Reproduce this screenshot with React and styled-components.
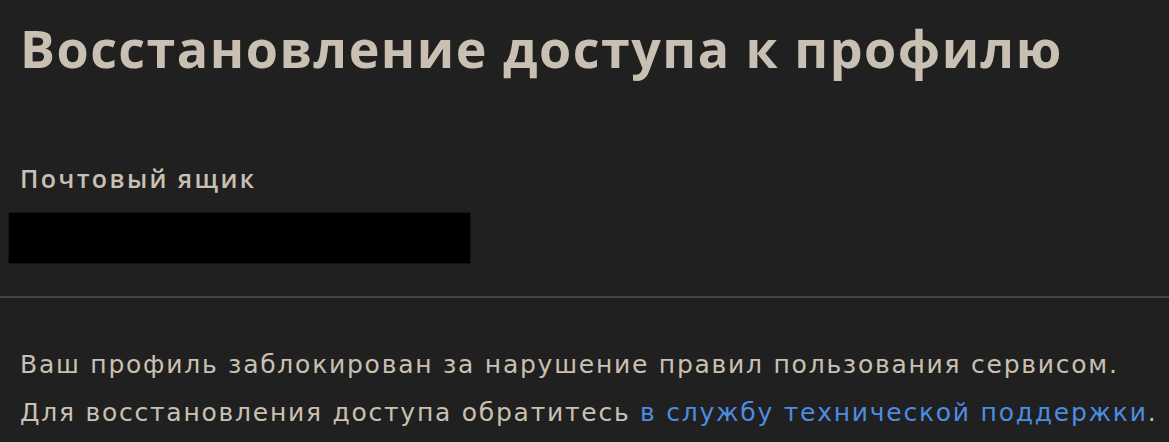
import React from "react";
import styled, { createGlobalStyle } from "styled-components";

const Global = createGlobalStyle`
  html, body { margin: 0; padding: 0; background: #202020; }
  body { font-family: "Open Sans", "Noto Sans", sans-serif; }
`;

const Page = styled.main`
  width: 1169px;
  height: 442px;
  background: #202020;
  color: #c9c0b3;
  overflow: hidden;
`;

const Header = styled.section`
  padding: 12px 20px 0;
`;

const Title = styled.h1`
  margin: 0;
  font-size: 52px;
  font-weight: 700;
  line-height: 72px;
  letter-spacing: 1.5px;
  color: #c9c0b3;
`;

const Form = styled.section`
  padding: 78px 8px 32px;
  border-bottom: 2px solid #444444;
`;

const Label = styled.div`
  padding-left: 12px;
  font-size: 25px;
  font-weight: 600;
  line-height: 32px;
  letter-spacing: 2.4px;
  color: #c9c0b3;
`;

const Redacted = styled.div`
  margin-top: 18px;
  width: 463px;
  height: 52px;
  background: #000;
  border: 1px solid #151515;
  box-sizing: border-box;
`;

const Notice = styled.section`
  padding: 43px 20px 0;
`;

const Line = styled.p`
  margin: 0;
  font-family: "DejaVu Sans", "Open Sans", sans-serif;
  font-size: 25px;
  line-height: 48px;
  letter-spacing: 1.75px;
  color: #c9c0b3;
  white-space: nowrap;
`;

const Link = styled.a`
  color: #4d8de0;
  text-decoration: none;
`;

export default function App() {
  return (
    <Page>
      <Global />
      <Header>
        <Title>Восстановление доступа к профилю</Title>
      </Header>
      <Form>
        <Label>Почтовый ящик</Label>
        <Redacted />
      </Form>
      <Notice>
        <Line>Ваш профиль заблокирован за нарушение правил пользования сервисом.</Line>
        <Line>
          Для восстановления доступа обратитесь <Link href="#">в службу технической поддержки</Link>.
        </Line>
      </Notice>
    </Page>
  );
}
